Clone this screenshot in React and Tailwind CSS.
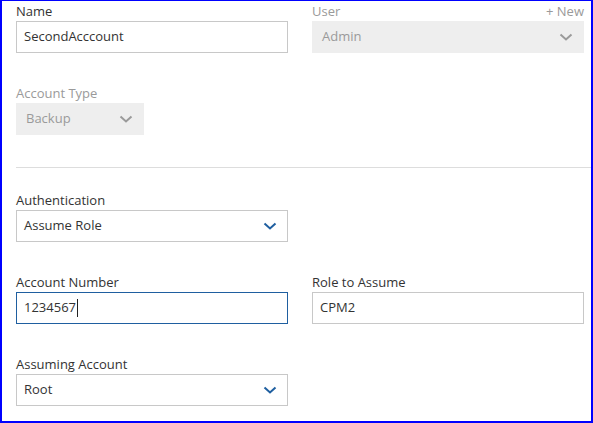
const Chevron = ({ className = "" }) => (
  <svg width="14" height="8" viewBox="0 0 14 8" className={className}>
    <path d="M1.5 1.5 L7 6.5 L12.5 1.5" fill="none" stroke="currentColor" strokeWidth="2" />
  </svg>
);

const Label = ({ children, muted, right }) => (
  <div
    className={`flex h-[17px] items-start justify-between text-[13px] leading-[14px] ${
      muted ? "text-[#9a9a9a]" : "text-[#333]"
    }`}
  >
    <span>{children}</span>
    {right && <span>{right}</span>}
  </div>
);

const TextBox = ({ value, focused }) => (
  <div
    className={`flex h-[32px] items-center border bg-white pl-[7px] text-[13px] text-[#333] ${
      focused ? "border-[#1f5fa0]" : "border-[#c8c8c8]"
    }`}
  >
    <span>{value}</span>
    {focused && <span className="ml-px h-[18px] w-px bg-[#222]" />}
  </div>
);

const SelectBox = ({ value, disabled, className = "" }) => (
  <div
    className={`flex h-[32px] items-center justify-between text-[13px] ${
      disabled
        ? "bg-[#eeeeee] pl-[10px] pr-[11px] text-[#9a9a9a]"
        : "border border-[#c8c8c8] bg-white pl-[7px] pr-[10px] text-[#333]"
    } ${className}`}
  >
    <span>{value}</span>
    <Chevron className={disabled ? "text-[#9a9a9a]" : "text-[#1f5fa0]"} />
  </div>
);

export default function App() {
  return (
    <div
      className="h-[423px] w-[593px] overflow-hidden border-t border-b-2 border-l-2 border-r-2 border-[#0000ff] bg-white pt-[3px]"
      style={{ fontFamily: '"Open Sans", "Noto Sans", sans-serif' }}
    >
      <div className="grid grid-cols-[272px_272px] gap-x-6 pl-[14px]">
        <div>
          <Label>Name</Label>
          <TextBox value="SecondAcccount" />
        </div>
        <div>
          <Label muted right="+ New">
            User
          </Label>
          <SelectBox value="Admin" disabled />
        </div>
      </div>

      <div className="mt-[33px] pl-[14px]">
        <Label muted>Account Type</Label>
        <SelectBox value="Backup" disabled className="w-[128px]" />
      </div>

      <div className="ml-[14px] mt-[32px] h-px bg-[#dddddd]" />

      <div className="mt-[25px] grid grid-cols-[272px_272px] gap-x-6 gap-y-[33px] pl-[14px]">
        <div>
          <Label>Authentication</Label>
          <SelectBox value="Assume Role" />
        </div>
        <div />
        <div>
          <Label>Account Number</Label>
          <TextBox value="1234567" focused />
        </div>
        <div>
          <Label>Role to Assume</Label>
          <TextBox value="CPM2" />
        </div>
        <div>
          <Label>Assuming Account</Label>
          <SelectBox value="Root" />
        </div>
      </div>
    </div>
  );
}
